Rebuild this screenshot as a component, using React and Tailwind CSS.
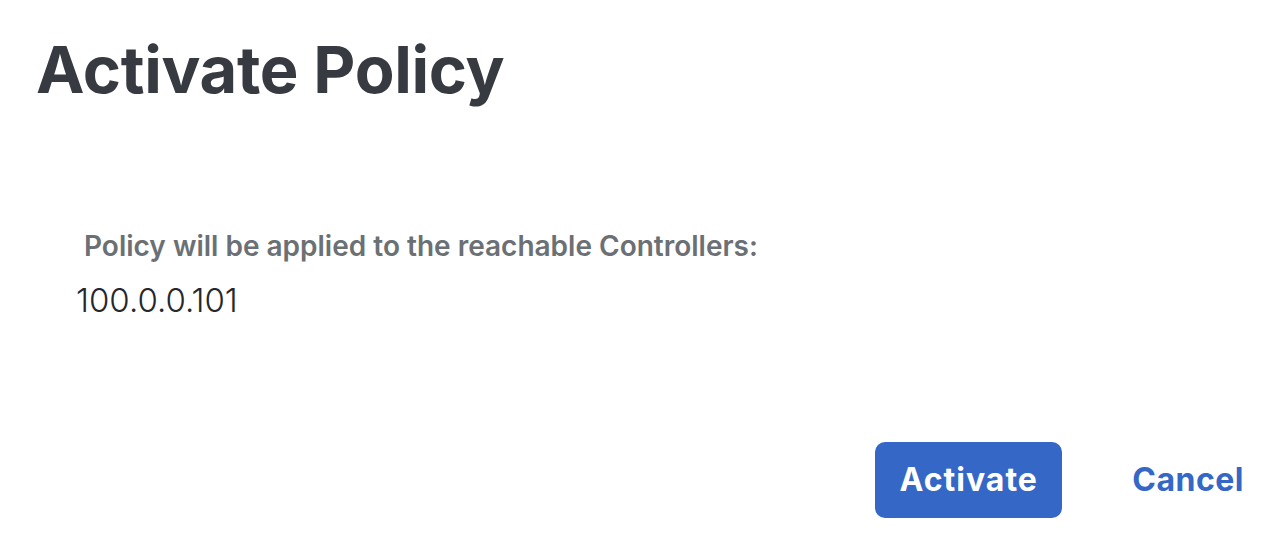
import React from 'react';

const App = () => {
  return (
    <div className="w-[1284px] h-[542px] bg-white flex flex-col font-['Inter',sans-serif]">
      <h1 className="pl-[36px] pt-[34px] text-[65px] leading-[72px] font-bold text-[#373a40] tracking-[-0.3px]">
        Activate Policy
      </h1>

      <div className="pl-[84px] pt-[122px]">
        <p className="text-[28px] leading-[36px] font-semibold text-[#6b7075]">
          Policy will be applied to the reachable Controllers:
        </p>
      </div>
      <div className="pl-[76px] pt-[16px]">
        <p className="text-[33px] leading-[40px] font-light text-[#25272b]">100.0.0.101</p>
      </div>

      <div className="flex-1" />

      <div className="flex items-center justify-end gap-[70px] pr-[40px] pb-[24px]">
        <button
          type="button"
          className="w-[187px] h-[76px] rounded-[10px] bg-[#3567c6] text-white text-[32px] font-bold tracking-[1px]"
        >
          Activate
        </button>
        <button type="button" className="text-[#3567c6] text-[32px] font-bold tracking-[0.5px]">
          Cancel
        </button>
      </div>
    </div>
  );
};

export default App;
